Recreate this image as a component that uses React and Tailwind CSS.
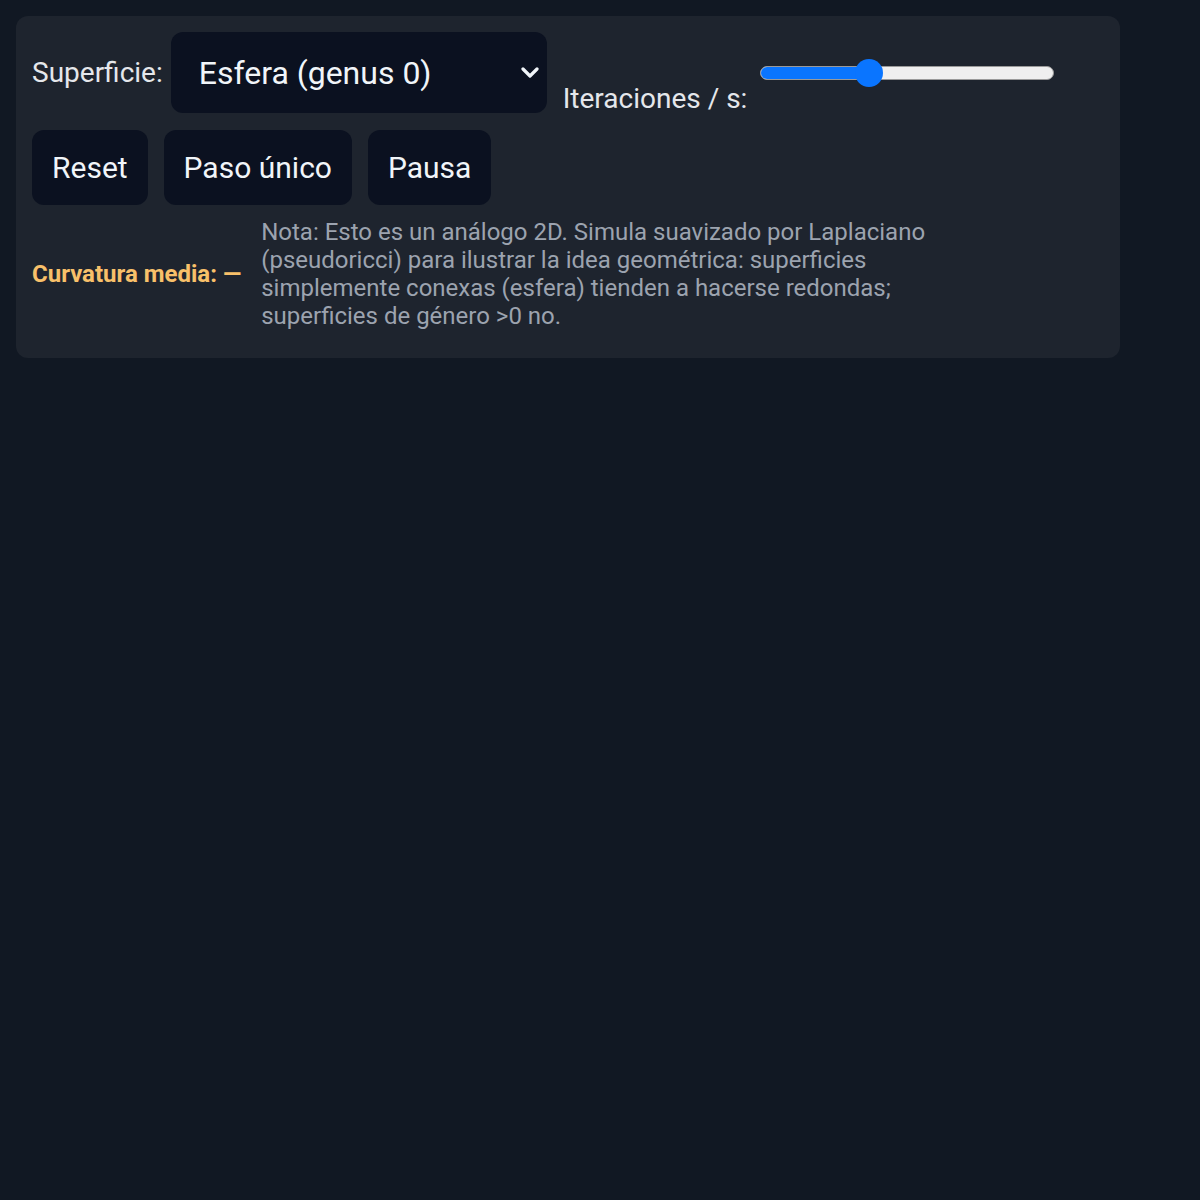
import { useState } from 'react';

const ChevronDown = () => (
  <svg width="18" height="12" viewBox="0 0 18 12" fill="none" className="shrink-0">
    <polyline points="2,2 9,9 16,2" stroke="#f1f5f9" strokeWidth="3.2" strokeLinecap="round" strokeLinejoin="round" />
  </svg>
);

const Slider = ({ value }) => {
  const pct = value;
  return (
    <div role="slider" aria-valuenow={value} className="relative w-[294px] h-[30px] flex items-center">
      <div className="w-full h-[14px] rounded-full bg-[#efefef] border border-[#9a9a9a] overflow-hidden flex">
        <div className="h-full bg-[#0a75ff]" style={{ width: `${pct}%` }} />
      </div>
      <div
        className="absolute top-[1px] w-[28px] h-[28px] rounded-full bg-[#0a75ff]"
        style={{ left: `calc(${pct}% - 14px)` }}
      />
    </div>
  );
};

const App = () => {
  const [running] = useState(true);

  return (
    <div className="min-h-screen bg-[#111823] p-4 font-['Roboto','Liberation_Sans',sans-serif]">
      <div className="w-[1104px] bg-[#1e242e] rounded-xl px-4 pt-4 pb-7">
        <div className="flex items-center">
          <span className="text-[28px] text-[#e5e7eb]">Superficie:</span>
          <div className="ml-2 w-[376px] h-[81px] rounded-xl bg-[#0b1120] flex items-center justify-between pl-7 pr-[8px]">
            <span className="text-[32px] text-[#f1f5f9]">Esfera (genus 0)</span>
            <ChevronDown />
          </div>
          <span className="ml-4 self-end text-[28px] leading-[28px] text-[#e5e7eb]">Iteraciones / s:</span>
          <div className="ml-[13px]">
            <Slider value={37} />
          </div>
        </div>

        <div className="flex gap-4 mt-[17px]">
          {['Reset', 'Paso único', running ? 'Pausa' : 'Reanudar'].map((label) => (
            <button
              key={label}
              className="h-[75px] px-5 rounded-xl bg-[#0b1120] text-[30px] text-[#f1f5f9]"
            >
              {label}
            </button>
          ))}
        </div>

        <div className="flex items-center gap-5 mt-[13px]">
          <span className="text-[24px] font-bold text-[#f8c06a]">Curvatura media: —</span>
          <p className="max-w-[700px] text-[24px] leading-[28px] text-[#9ca3af]">
            Nota: Esto es un análogo 2D. Simula suavizado por Laplaciano (pseudoricci) para ilustrar la idea
            geométrica: superficies simplemente conexas (esfera) tienden a hacerse redondas; superficies de
            género &gt;0 no.
          </p>
        </div>
      </div>
    </div>
  );
};

export default App;
